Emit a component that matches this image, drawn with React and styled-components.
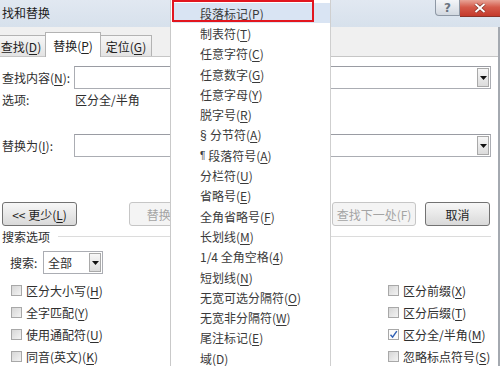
import React from 'react';
import styled, { createGlobalStyle } from 'styled-components';

const Global = createGlobalStyle`
  html, body { margin: 0; padding: 0; background: #fff; }
  body {
    font-family: "Noto Sans CJK SC", "Noto Sans", sans-serif;
    font-size: 12px;
    color: #2e2e2e;
    overflow: hidden;
  }
  #root { width: 500px; height: 366px; }
  u { text-decoration-thickness: 1px; text-underline-offset: 2px; }
`;

const Dialog = styled.div`
  position: relative;
  width: 500px;
  height: 366px;
  display: flex;
  flex-direction: column;
  overflow: hidden;
  background: #fff;
`;

const TitleBar = styled.div`
  height: 27px;
  flex: none;
  display: flex;
  align-items: flex-start;
  background: linear-gradient(#e1e8f1, #d7e1ec);
`;

const Title = styled.div`
  line-height: 26px;
  padding-left: 2px;
  color: #1a1a1a;
`;

const Caption = styled.div`
  margin-left: auto;
  display: flex;
`;

const HelpBtn = styled.div`
  width: 25px;
  height: 16px;
  box-sizing: border-box;
  border: 1px solid #8e98a5;
  border-top: none;
  border-radius: 0 0 0 4px;
  background: linear-gradient(#f3f5f8, #d2d8e0);
  display: flex;
  align-items: center;
  justify-content: center;
  font: bold 12px "DejaVu Sans", sans-serif;
  color: #6a7480;
`;

const CloseBtn = styled.div`
  width: 40px;
  height: 17px;
  box-sizing: border-box;
  border-bottom: 1px solid #8a3328;
  background: linear-gradient(#e8a497, #d45a4a 45%, #c43a2b);
  display: flex;
  align-items: center;
  justify-content: center;
`;

const Body = styled.div`
  flex: 1;
  display: flex;
  flex-direction: column;
  border-right: 2px solid #a4a9b0;
  border-bottom: 2px solid #b8b8b8;
`;

const TabStrip = styled.div`
  height: 30px;
  flex: none;
  box-sizing: border-box;
  display: flex;
  align-items: flex-end;
  background: #f0f0f0;
  border-bottom: 1px solid #c6c6c6;
`;

const Tab = styled.div`
  position: relative;
  z-index: ${p => (p.$active ? 1 : 0)};
  box-sizing: border-box;
  width: ${p => p.$w}px;
  height: ${p => (p.$active ? 25 : 21)}px;
  margin-left: ${p => p.$ml}px;
  margin-bottom: ${p => (p.$active ? -1 : 0)}px;
  border: 1px solid #b3b3b3;
  border-bottom: none;
  background: ${p => (p.$active ? '#fff' : 'linear-gradient(#f6f6f6, #e3e3e3)')};
  display: flex;
  align-items: center;
  justify-content: center;
  color: #222;
`;

const Content = styled.div`
  display: flex;
  flex-direction: column;
  padding: 9px 7px 0 2px;
`;

const FieldRow = styled.div`
  display: flex;
  align-items: center;
  height: 23px;
  margin-top: ${p => p.$mt || 0}px;
`;

const Label = styled.div`
  width: ${p => p.$w}px;
  flex: none;
  white-space: nowrap;
`;

const Combo = styled.div`
  flex: 1;
  height: 23px;
  box-sizing: border-box;
  border: 1px solid #abadb3;
  border-top-color: #9a9ca3;
  background: #fff;
  display: flex;
  justify-content: flex-end;
  padding: 1px;
`;

const DropBtn = styled.div`
  width: 12px;
  box-sizing: border-box;
  border: 1px solid #a9a9a9;
  background: linear-gradient(#f7f7f7, #dcdcdc);
  display: flex;
  align-items: center;
  justify-content: center;
`;

const InfoRow = styled.div`
  display: flex;
  align-items: center;
  height: 20px;
`;

const ButtonRow = styled.div`
  display: flex;
  gap: 9px;
  height: 24px;
  margin-top: 45px;
`;

const Button = styled.div`
  box-sizing: border-box;
  width: ${p => p.$w}px;
  height: 24px;
  margin-right: ${p => p.$mr || 0}px;
  border: 1px solid ${p => (p.$disabled ? '#c6c6c6' : '#727272')};
  border-radius: 3px;
  background: ${p => (p.$disabled ? '#f4f4f4' : 'linear-gradient(#f7f7f7, #e8e8e8 50%, #d9d9d9)')};
  color: ${p => (p.$disabled ? '#a4a4a4' : '#1f1f1f')};
  display: flex;
  align-items: center;
  justify-content: center;
  white-space: nowrap;
`;

const SectionRow = styled.div`
  display: flex;
  align-items: center;
  height: 16px;
  margin-top: 2px;
`;

const SectionLine = styled.div`
  flex: 1;
  height: 1px;
  margin-left: 8px;
  background: #dcdcdc;
`;

const SearchRow = styled.div`
  display: flex;
  align-items: center;
  height: 23px;
  margin-top: 7px;
  padding-left: 8px;
`;

const Select = styled.div`
  width: 60px;
  height: 23px;
  box-sizing: border-box;
  border: 1px solid #abadb3;
  display: flex;
  align-items: stretch;
  padding: 1px 1px 1px 4px;
`;

const SelectText = styled.div`
  flex: 1;
  display: flex;
  align-items: center;
`;

const CheckGrid = styled.div`
  display: grid;
  grid-template-columns: 377px 1fr;
  grid-auto-rows: 22px;
  margin-top: 5px;
  padding-left: 9px;
`;

const CheckItem = styled.div`
  display: flex;
  align-items: center;
  gap: 4px;
  white-space: nowrap;
`;

const Box = styled.div`
  width: 11px;
  height: 11px;
  box-sizing: border-box;
  border: 1px solid #a8a8a8;
  background: ${p => (p.$checked ? '#fbfbfb' : 'linear-gradient(135deg, #d6d6d6, #f3f3f3)')};
  display: flex;
  align-items: center;
  justify-content: center;
`;

const Menu = styled.div`
  position: absolute;
  z-index: 5;
  left: 170px;
  top: 0;
  width: 161px;
  height: 366px;
  box-sizing: border-box;
  padding-top: 3px;
  background: #fff;
  border-left: 1px solid #c9c9c9;
  border-right: 1px solid #cfcfcf;
  display: flex;
  flex-direction: column;
  overflow: hidden;
`;

const MenuItem = styled.div`
  height: 20.3px;
  flex: none;
  display: flex;
  align-items: center;
  padding-left: ${p => (p.$active ? 27 : 29)}px;
  margin-left: ${p => (p.$active ? 2 : 0)}px;
  background: ${p => (p.$active ? '#d9e4f3' : 'transparent')};
  color: #3a3a3a;
  white-space: pre;
`;

const Sym = styled.span`
  font-family: "Liberation Sans", sans-serif;
  font-size: ${p => p.$size || 12}px;
`;

const Annotation = styled.div`
  position: absolute;
  left: 1px;
  top: 0;
  width: 142px;
  height: 22px;
  box-sizing: border-box;
  border: 2.5px solid #e2161f;
  pointer-events: none;
`;

const Arrow = () => (
  <svg width="7" height="4" viewBox="0 0 7 4"><path d="M0 0H7L3.5 4Z" fill="#111" /></svg>
);

const Check = () => (
  <svg width="9" height="9" viewBox="0 0 9 9"><path d="M1.5 4.8L3.6 7.2L7.8 1.2" fill="none" stroke="#2f5fb4" strokeWidth="1.4" /></svg>
);

const menuItems = [
  [null, '段落标记(', 'P', ')'],
  [null, '制表符(', 'T', ')'],
  [null, '任意字符(', 'C', ')'],
  [null, '任意数字(', 'G', ')'],
  [null, '任意字母(', 'Y', ')'],
  [null, '脱字号(', 'R', ')'],
  ['§', '分节符(', 'A', ')'],
  ['¶', '段落符号(', 'A', ')'],
  [null, '分栏符(', 'U', ')'],
  [null, '省略号(', 'E', ')'],
  [null, '全角省略号(', 'F', ')'],
  [null, '长划线(', 'M', ')'],
  [null, '1/4 全角空格(', '4', ')'],
  [null, '短划线(', 'N', ')'],
  [null, '无宽可选分隔符(', 'O', ')'],
  [null, '无宽非分隔符(', 'W', ')'],
  [null, '尾注标记(', 'E', ')'],
  [null, '域(', 'D', ')'],
];

const checks = [
  ['区分大小写(', 'H', ')', false],
  ['区分前缀(', 'X', ')', false],
  ['全字匹配(', 'Y', ')', false],
  ['区分后缀(', 'T', ')', false],
  ['使用通配符(', 'U', ')', false],
  ['区分全/半角(', 'M', ')', true],
  ['同音(英文)(', 'K', ')', false],
  ['忽略标点符号(', 'S', ')', false],
];

export default function App() {
  return (
    <>
      <Global />
      <Dialog>
        <TitleBar>
          <Title>找和替换</Title>
          <Caption>
            <HelpBtn>?</HelpBtn>
            <CloseBtn>
              <svg width="12" height="10" viewBox="0 0 12 10">
                <path d="M1.5 1L10.5 9M10.5 1L1.5 9" stroke="#7a2a20" strokeWidth="3.2" />
                <path d="M1.5 1L10.5 9M10.5 1L1.5 9" stroke="#fff" strokeWidth="2" />
              </svg>
            </CloseBtn>
          </Caption>
        </TitleBar>
        <Body>
          <TabStrip>
            <Tab $w={50} $ml={-4}>查找(<u>D</u>)</Tab>
            <Tab $w={56} $ml={-1} $active>替换(<u>P</u>)</Tab>
            <Tab $w={52} $ml={-1}>定位(<u>G</u>)</Tab>
          </TabStrip>
          <Content>
            <FieldRow>
              <Label $w={72}>查找内容(<u>N</u>):</Label>
              <Combo><DropBtn><Arrow /></DropBtn></Combo>
            </FieldRow>
            <InfoRow>
              <Label $w={73}>选项:</Label>
              <span>区分全/半角</span>
            </InfoRow>
            <FieldRow $mt={25}>
              <Label $w={72}>替换为(<u>I</u>):</Label>
              <Combo><DropBtn><Arrow /></DropBtn></Combo>
            </FieldRow>
            <ButtonRow>
              <Button $w={75} $mr={43}>&lt;&lt; 更少(<u>L</u>)</Button>
              <Button $w={75} $disabled>替换(R)</Button>
              <Button $w={110} $disabled />
              <Button $w={84} $disabled>查找下一处(F)</Button>
              <Button $w={65}>取消</Button>
            </ButtonRow>
            <SectionRow>
              <span>搜索选项</span>
              <SectionLine />
            </SectionRow>
            <SearchRow>
              <Label $w={33}>搜索:</Label>
              <Select>
                <SelectText>全部</SelectText>
                <DropBtn><Arrow /></DropBtn>
              </Select>
            </SearchRow>
            <CheckGrid>
              {checks.map(([a, k, b, on], i) => (
                <CheckItem key={i}>
                  <Box $checked={on}>{on && <Check />}</Box>
                  <span>{a}<u>{k}</u>{b}</span>
                </CheckItem>
              ))}
            </CheckGrid>
          </Content>
        </Body>
        <Menu>
          {menuItems.map(([s, a, k, b], i) => (
            <MenuItem key={i} $active={i === 0}>
              {s && <Sym $size={s === '¶' ? 10 : 12}>{s + ' '}</Sym>}
              {a}<u>{k}</u>{b}
            </MenuItem>
          ))}
          <Annotation />
        </Menu>
      </Dialog>
    </>
  );
}
